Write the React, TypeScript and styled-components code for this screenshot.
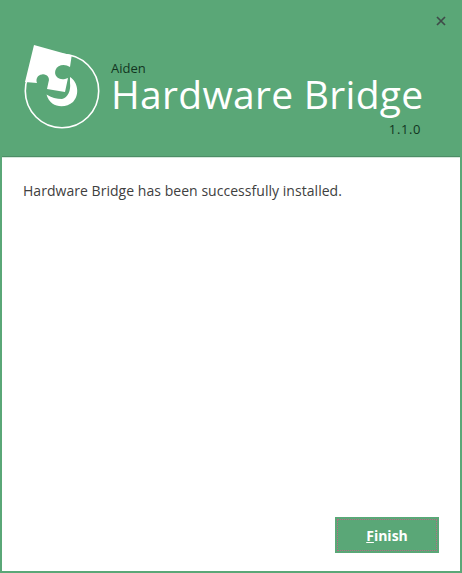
import styled, { createGlobalStyle } from "styled-components";

const GlobalStyle = createGlobalStyle`
  html, body {
    margin: 0;
    padding: 0;
    background: #ffffff;
  }
`;

const GREEN = "#5aa777";

function Logo() {
  return (
    <LogoSvg viewBox="0 0 80 90" width="80" height="90" aria-hidden="true">
      <circle cx="38" cy="47" r="36.7" fill="none" stroke="#fff" strokeWidth="1.6" />
      <path
        d="M10 1 L47.7 11.5 L46 23 C41 19.5 33.5 20.5 31.5 26 C29.5 32 35 36.5 41 35 L44 34 L41 48 L23 45 L24.5 38 C26.5 33.5 22 29.5 18 30.5 C13.5 31 11.5 35 13 39 L1 38 Z"
        fill="#fff"
      />
      <path
        d="M46 33 C54 38 56 51 49 58 C41 65 26 64 22.5 50.5 C27 53.5 33 55 38 55 C44 54 47 46 46 39 Z"
        fill="#fff"
      />
    </LogoSvg>
  );
}

export default function App() {
  return (
    <>
      <GlobalStyle />
      <Window>
        <Header>
          <CloseButton aria-label="Close">
            <svg width="10" height="10" viewBox="0 0 10 10">
              <path d="M1 1 L9 9 M9 1 L1 9" stroke="#3f4a48" strokeWidth="1.7" fill="none" />
            </svg>
          </CloseButton>
          <Brand>
            <Logo />
            <Titles>
              <Vendor>Aiden</Vendor>
              <ProductName>Hardware Bridge</ProductName>
              <Version>1.1.0</Version>
            </Titles>
          </Brand>
        </Header>
        <Body>
          <Message>Hardware Bridge has been successfully installed.</Message>
          <Footer>
            <FinishButton>
              <u>F</u>inish
            </FinishButton>
          </Footer>
        </Body>
      </Window>
    </>
  );
}

const Window = styled.div`
  width: 462px;
  height: 573px;
  box-sizing: border-box;
  display: flex;
  flex-direction: column;
  border: 2px solid ${GREEN};
  border-top: none;
  background: #fff;
  font-family: "Open Sans", "Noto Sans", sans-serif;
  overflow: hidden;
`;

const Header = styled.header`
  position: relative;
  flex: none;
  height: 157px;
  margin: 0 -2px;
  box-sizing: border-box;
  background: ${GREEN};
  border-bottom: 1px solid #4d8d66;
  padding: 25px 0 0 24px;
`;

const CloseButton = styled.button`
  position: absolute;
  top: 16px;
  right: 16px;
  width: 10px;
  height: 10px;
  padding: 0;
  border: none;
  background: none;
  display: flex;
`;

const Brand = styled.div`
  display: flex;
  align-items: flex-start;
`;

const LogoSvg = styled.svg`
  flex: none;
  margin-top: 19px;
`;

const Titles = styled.div`
  width: 310px;
  margin-left: 7px;
  padding-top: 36px;
  display: flex;
  flex-direction: column;
`;

const Vendor = styled.div`
  font-size: 13px;
  line-height: 14px;
  color: #12351f;
`;

const ProductName = styled.div`
  font-size: 39px;
  line-height: 38px;
  font-weight: 400;
  letter-spacing: 0.3px;
  color: #fff;
  white-space: nowrap;
`;

const Version = styled.div`
  align-self: flex-end;
  margin-top: 9px;
  font-size: 13px;
  line-height: 14px;
  letter-spacing: 0.6px;
  color: #12351f;
`;

const Body = styled.main`
  flex: 1;
  display: flex;
  flex-direction: column;
  border-top: 1px solid #d5e8dc;
  padding: 23px 21px 18px;
`;

const Message = styled.p`
  margin: 0;
  font-size: 14px;
  line-height: 19px;
  letter-spacing: 0.04px;
  color: #404040;
`;

const Footer = styled.div`
  margin-top: auto;
  display: flex;
  justify-content: flex-end;
`;

const FinishButton = styled.button`
  width: 104px;
  height: 36px;
  box-sizing: border-box;
  background: ${GREEN};
  border: none;
  outline: 1px dotted #b86a85;
  outline-offset: -3px;
  color: #fff;
  font-family: inherit;
  font-size: 14px;
  font-weight: 700;
  padding: 0;
`;
